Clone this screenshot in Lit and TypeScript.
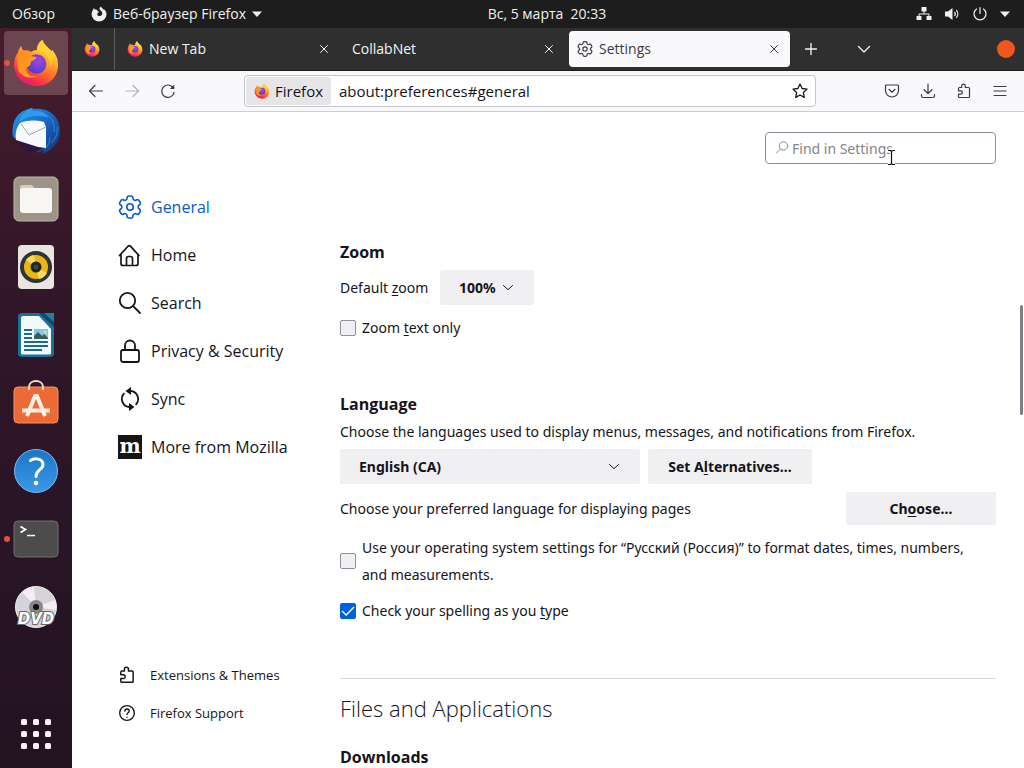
import { LitElement, html, svg, css } from "lit";
import { customElement } from "lit/decorators.js";
import { classMap } from "lit/directives/class-map.js";

const base = css`
  :host,
  * {
    box-sizing: border-box;
  }
  :host {
    font-family: "Open Sans", "Noto Sans", sans-serif;
    font-size: 14px;
    line-height: 20px;
  }
  svg {
    display: block;
    flex: none;
    overflow: visible;
  }
  button,
  input,
  select {
    font: inherit;
    color: inherit;
    margin: 0;
    padding: 0;
    border: 0;
    background: none;
  }
  a {
    color: inherit;
    text-decoration: none;
  }
`;

const icon = (body: unknown, size = 16, box = 16, width = 1) => html`<svg
  width=${size}
  height=${size}
  viewBox="0 0 ${box} ${box}"
  fill="none"
  stroke="currentColor"
  stroke-width=${width}
  stroke-linecap="round"
  stroke-linejoin="round"
  aria-hidden="true"
>
  ${body}
</svg>`;

/* Outline of a six-toothed gear centred on a 24 unit box. */
const gearOutline = (() => {
  const pts: number[][] = [];
  for (let i = 0; i < 6; i++) {
    const mid = i * 60 - 90;
    for (const [offset, radius] of [
      [-21, 8.2],
      [-14, 11.4],
      [14, 11.4],
      [21, 8.2],
    ]) {
      const a = ((mid + offset) * Math.PI) / 180;
      pts.push([12 + radius * Math.cos(a), 12 + radius * Math.sin(a)]);
    }
  }
  const lerp = (p: number[], q: number[], t: number) =>
    `${(p[0] + (q[0] - p[0]) * t).toFixed(2)} ${(p[1] + (q[1] - p[1]) * t).toFixed(2)}`;
  return (
    pts
      .map((p, i) => {
        const prev = pts[(i + pts.length - 1) % pts.length];
        const next = pts[(i + 1) % pts.length];
        return `${i ? "L" : "M"}${lerp(p, prev, 0.4)}Q${p[0].toFixed(2)} ${p[1].toFixed(2)} ${lerp(p, next, 0.4)}`;
      })
      .join("") + "Z"
  );
})();

const gear = svg`<path d=${gearOutline}/><circle cx="12" cy="12" r="3.2"/>`;
const puzzle = svg`<path d="M5.700 4.500V3a1.800 1.800 0 0 1 3.600 0v1.500h3.200a1 1 0 0 1 1 1v8a1 1 0 0 1-1 1H3.500a1 1 0 0 1-1-1v-2.300h2.200a1.700 1.700 0 0 0 0-3.400H2.500V5.500a1 1 0 0 1 1-1z"/>`;
const chevron = svg`<path d="M3.500 5.500l4.500 4.200 4.500-4.200"/>`;
const cross = svg`<path d="M4.500 4.500l7 7M11.500 4.500l-7 7"/>`;

const firefox = (size: number) => html`<svg width=${size} height=${size} viewBox="0 0 48 48" aria-hidden="true">
  <defs>
    <linearGradient id="flame" x1=".8" y1=".05" x2=".3" y2="1">
      <stop offset="0" stop-color="#fff04a" />
      <stop offset=".3" stop-color="#ffb52b" />
      <stop offset=".6" stop-color="#ff6b2d" />
      <stop offset=".85" stop-color="#f9284f" />
      <stop offset="1" stop-color="#e01a80" />
    </linearGradient>
    <radialGradient id="globe" cx=".6" cy=".35" r=".7">
      <stop offset="0" stop-color="#a245e6" />
      <stop offset="1" stop-color="#4b3fc0" />
    </radialGradient>
    <linearGradient id="ear" x1="0" y1="0" x2="1" y2="1">
      <stop offset="0" stop-color="#ff8a1e" />
      <stop offset="1" stop-color="#ffa52a" />
    </linearGradient>
  </defs>
  <path
    fill="url(#flame)"
    d="M30.500 1c1 3.500 3.500 5.500 6 8.200 1.500 1 2.200 1.700 3 3 .5-.4.5-1 .4-1.700 4.500 5.500 6.600 10 6.100 17.500C45 39.500 36 47 24.500 47 12 47 2 37.500 2 25.500c0-5 2-9.500 4-12 .3-2 1.200-4.500 3.300-6.500.3 2 1.200 3.600 2.500 4.700 2.700-.4 5.200.1 7.200 1.300 2-1.500 4.500-2 6-2-.2-4 2-8 5.500-10z"
  />
  <circle cx="24.500" cy="25" r="9.800" fill="url(#globe)" />
  <path
    fill="url(#ear)"
    d="M6 13.500c2-1.600 8-3.500 13-.5l-1 3.500c1.500 1.300 5 .8 6.500 1.700-.5 2.500-4 3.200-6 4.800 1 3-2 5-4 5.200-2 6 4 10 10 9-8 4-18-1-19-9-.5-5-.5-10 .5-14.700z"
  />
  <path fill="#ffd335" opacity=".8" d="M30.500 1c1 3.500 3.500 5.500 6 8.200 4 4.500 5 12 2 19 .3-6-2.500-12-8-14.500-2-1-3.500-1.600-5.500-2.700C25 6.500 27 3 30.500 1z" />
</svg>`;

const thunderbird = html`<svg width="48" height="48" viewBox="0 0 48 48" aria-hidden="true">
  <defs>
    <linearGradient id="bird" x1="0" y1="0" x2="1" y2="1">
      <stop offset="0" stop-color="#1d9bf0" />
      <stop offset=".5" stop-color="#1a66c4" />
      <stop offset="1" stop-color="#16306f" />
    </linearGradient>
  </defs>
  <path fill="url(#bird)" d="M20 1l2 1c14-2 26 7 26 22 0 11-8 20-18 23l2-4-8 3 3-4-8 2L1 30C-1 14 5 4 20 1z" />
  <path fill="#2b1740" d="M4 31l28 9-4 3-9 2C11 43 6 38 4 31z" />
  <path fill="#f7f9fc" d="M4 33c-1-6 0-12 4-17 8-3 16-3 24-1l2 5v21l-8-1z" />
  <path d="M9 17l8 11 17-8" fill="none" stroke="#98a4b8" stroke-width="1" />
  <path fill="#2f9bea" d="M7 15C9 7 14 3 20 1c-1 2 0 3 2 3 7-1 12 2 14 7-8-4-20-3-29 4z" />
  <path fill="none" stroke="#3aa0ee" opacity=".7" d="M34 8c7 3 9 10 8 17M45 20c1 6-1 12-6 16M38 30c0 5-2 9-5 12" />
</svg>`;

const files = html`<svg width="48" height="48" viewBox="0 0 48 48" aria-hidden="true">
  <rect x="2" y="2" width="44" height="44" rx="5" fill="#9c9486" stroke="#c0b8aa" />
  <path fill="#d5cdc0" d="M8 12a2 2 0 0 1 2-2h10l3 4v8H8z" />
  <rect x="8" y="13" width="32" height="25" rx="3" fill="#f8f6f2" />
</svg>`;

const music = html`<svg width="48" height="48" viewBox="0 0 48 48" aria-hidden="true">
  <rect x="6" y="2" width="36" height="44" rx="4" fill="#e9e5e0" />
  <circle cx="24" cy="24" r="16" fill="#333" />
  <circle cx="24" cy="24" r="12" fill="#e9b80e" />
  <path fill="#f8dc55" d="M24 24L14 17a12 12 0 0 1 8-5zM24 24l11 6a12 12 0 0 1-8 6z" />
  <circle cx="24" cy="24" r="5.500" fill="#1f2423" />
  <circle cx="24" cy="24" r="2.500" fill="#3b4a41" />
</svg>`;

const writer = html`<svg width="48" height="48" viewBox="0 0 48 48" aria-hidden="true">
  <path fill="#1b7196" d="M10 2h22l10 10v30a4 4 0 0 1-4 4H10a4 4 0 0 1-4-4V6a4 4 0 0 1 4-4z" />
  <path fill="#f3f9fb" d="M11 5h16l12 13v24a1.500 1.500 0 0 1-1.500 1.500h-27A1.500 1.500 0 0 1 9 42V7a2 2 0 0 1 2-2z" />
  <path fill="#0e4a68" d="M27 2h15v14z" />
  <path fill="#227ea0" d="M32 2h10v9z" />
  <path d="M12 19h8M12 23h8M12 27h8M12 31h24M12 35h24M12 39h18" stroke="#1c6a8e" stroke-width="2" />
  <rect x="22" y="18" width="14" height="10" fill="#83c7e6" />
  <circle cx="33" cy="21" r="1.500" fill="#f7e06a" />
  <path fill="#355f55" d="M22 28v-3l4-4 4 4 2-2 4 4v1z" />
</svg>`;

const software = html`<svg width="48" height="48" viewBox="0 0 48 48" aria-hidden="true">
  <rect x="2" y="8" width="44" height="36" rx="4" fill="#ec6a36" stroke="#f59468" />
  <path d="M17 11V8c0-8 14-8 14 0v3" fill="none" stroke="#f6dcb8" stroke-width="2" />
  <path d="M15 37l8-20h2l8 20" fill="none" stroke="#fff0e4" stroke-width="4" stroke-linejoin="round" />
  <path d="M10 31.500h28" stroke="#fff0e4" stroke-width="4" />
</svg>`;

const help = html`<svg width="48" height="48" viewBox="0 0 48 48" aria-hidden="true">
  <defs>
    <linearGradient id="sea" x1="0" y1="0" x2="0" y2="1">
      <stop offset="0" stop-color="#1a76c8" />
      <stop offset="1" stop-color="#3b98e6" />
    </linearGradient>
  </defs>
  <circle cx="24" cy="24" r="21.500" fill="url(#sea)" stroke="#7dbbee" />
  <path d="M18.500 13.500c4-3 12.500-2 12.500 4 0 5.500-7 5-7 12" fill="none" stroke="#fff" stroke-width="3" stroke-linecap="round" />
  <circle cx="24" cy="36" r="2.300" fill="#fff" />
</svg>`;

const terminal = html`<svg width="48" height="48" viewBox="0 0 48 48" aria-hidden="true">
  <rect x="2" y="6" width="44" height="36" rx="4" fill="#4c4c4c" stroke="#707070" />
  <path d="M8.500 11.500l5 3-5 3M15 20.500h8" fill="none" stroke="#fff" stroke-width="1.700" />
</svg>`;

const dvd = html`<svg width="48" height="48" viewBox="0 0 48 48" aria-hidden="true">
  <circle cx="24" cy="24" r="20.500" fill="#d5d3d5" stroke="#eee" />
  <path fill="#f3eef2" d="M24 24L10 9a20 20 0 0 1 12-5zM24 24l19-7a20 20 0 0 1 1 10z" />
  <circle cx="24" cy="24" r="7" fill="#878688" />
  <circle cx="24" cy="24" r="3" fill="#111" />
  <text
    x="24"
    y="41"
    text-anchor="middle"
    font-family="DejaVu Sans, sans-serif"
    font-size="15"
    font-weight="700"
    font-style="italic"
    fill="#fff"
    stroke="#666"
    stroke-width="2"
    paint-order="stroke"
  >
    DVD
  </text>
</svg>`;

const apps = html`<svg width="48" height="48" viewBox="0 0 48 48" fill="#fbeef6" aria-hidden="true">
  ${[9, 21, 33].map((y) => [9, 21, 33].map((x) => svg`<rect x=${x} y=${y} width="6" height="6" rx="1.500"/>`))}
</svg>`;

@customElement("top-bar")
class TopBar extends LitElement {
  static styles = [
    base,
    css`
      :host {
        display: grid;
        grid-template-columns: 1fr auto 1fr;
        align-items: center;
        height: 28px;
        padding: 0 14px 0 12px;
        background: #1d1d1d;
        color: #f0f0f0;
      }
      .left,
      .right,
      .app {
        display: flex;
        align-items: center;
      }
      .left {
        gap: 36px;
      }
      .app {
        gap: 6px;
      }
      .right {
        justify-content: flex-end;
        gap: 12px;
      }
      .clock {
        margin-left: 72px;
        white-space: pre;
      }
    `,
  ];
  render() {
    const caret = html`<svg width="10" height="6" viewBox="0 0 10 6" fill="currentColor" aria-hidden="true"><path d="M0 .5h10L5 6z" /></svg>`;
    return html`
      <div class="left">
        <button>Обзор</button>
        <button class="app">
          <svg width="16" height="16" viewBox="0 0 16 16" aria-hidden="true">
            <path fill="currentColor" d="M10 .5c.5 1.500 2 2.200 3 3.500l.6-.6c1.300 1.600 1.900 3.100 1.900 5A7.400 7.400 0 0 1 8 15.500 7.400 7.400 0 0 1 .6 8.300C.6 6.500 1.200 5 2 4l.8-2 1 1.600C5 3.300 6 3.600 6.600 4l-.3 1.200 2 .6-2 1.600C6 9 7 10 8.500 10c2 0 3-1.500 2.800-3C11 5 8.500 4.500 8.500 2.800 8.500 2 9 1 10 .5z" />
          </svg>
          <span>Веб-браузер Firefox</span>${caret}
        </button>
      </div>
      <button class="clock">Вс, 5 марта  20:33</button>
      <div class="right">
        <svg width="16" height="16" viewBox="0 0 16 16" fill="currentColor" aria-hidden="true">
          <rect x="5.500" y="1" width="5" height="4.500" rx=".5" />
          <rect x=".5" y="10" width="5" height="4" rx=".5" />
          <rect x="10.500" y="10" width="5" height="4" rx=".5" />
          <path d="M3 11V8h10v3M8 5v3" fill="none" stroke="currentColor" />
        </svg>
        <svg width="16" height="16" viewBox="0 0 16 16" fill="currentColor" aria-hidden="true">
          <path d="M1 5.500h3L8.500 2v12L4 10.500H1z" />
          <path d="M10.500 6c1 1.200 1 2.800 0 4M12.300 4.200c2 2.200 2 5.400 0 7.600" fill="none" stroke="currentColor" stroke-width="1.200" />
        </svg>
        ${icon(svg`<path d="M4.500 3a6 6 0 1 0 7 0M8 1.500v6"/>`, 16, 16, 1.2)} ${caret}
      </div>
    `;
  }
}

@customElement("app-dock")
class AppDock extends LitElement {
  static styles = [
    base,
    css`
      :host {
        display: flex;
        flex-direction: column;
        align-items: center;
        gap: 4px;
        width: 72px;
        padding: 3px 4px 2px;
        background: linear-gradient(#471c2c, #321629 35%, #291527 65%, #231321);
      }
      .tile {
        position: relative;
        display: grid;
        place-items: center;
        width: 64px;
        height: 64px;
        border-radius: 4px;
      }
      .active {
        background: #6b4550;
      }
      .running::before {
        content: "";
        position: absolute;
        left: 0;
        top: 29px;
        width: 6px;
        height: 6px;
        border-radius: 50%;
        background: #e2533a;
      }
      .all {
        margin-top: auto;
      }
    `,
  ];
  render() {
    const tiles: [string, unknown, boolean?, boolean?][] = [
      ["Firefox", firefox(48), true, true],
      ["Thunderbird", thunderbird],
      ["Файлы", files],
      ["Rhythmbox", music],
      ["LibreOffice Writer", writer],
      ["Ubuntu Software", software],
      ["Справка", help],
      ["Терминал", terminal, false, true],
      ["DVD", dvd],
    ];
    return html`${tiles.map(
        ([name, art, active, running]) =>
          html`<button aria-label=${name} class=${classMap({ tile: true, active: !!active, running: !!running })}>${art}</button>`,
      )}<button class="tile all" aria-label="Показать приложения">${apps}</button>`;
  }
}

@customElement("browser-chrome")
class BrowserChrome extends LitElement {
  static styles = [
    base,
    css`
      :host {
        display: block;
        color: #15141a;
      }
      .tabs {
        display: flex;
        align-items: center;
        height: 43px;
        padding-right: 9px;
        background: #302f30;
        border-bottom: 1px solid #1c1b1d;
        color: #f4f4f4;
      }
      .pinned {
        display: grid;
        place-items: center;
        align-self: stretch;
        width: 43px;
        margin-right: 2px;
        padding-right: 2px;
        border-right: 1px solid #5c5b5e;
      }
      .tab {
        display: flex;
        align-items: center;
        flex: 0 1 221px;
        height: 36px;
        margin: 0 2px;
        padding: 0 8px;
        border-radius: 4px;
      }
      .selected {
        background: #f9f9fb;
        color: #3c3b42;
      }
      .label {
        display: flex;
        align-items: center;
        flex: 1;
        gap: 6px;
      }
      .tool {
        display: grid;
        place-items: center;
        width: 36px;
        height: 36px;
      }
      .new {
        width: 38px;
      }
      .list {
        margin-left: 16px;
      }
      .close-window {
        width: 18px;
        height: 18px;
        margin-left: auto;
        border-radius: 50%;
        background: #f0561d;
      }
      .bar {
        display: grid;
        grid-template-columns: 172px minmax(0, 572px) 1fr;
        align-items: center;
        height: 41px;
        background: #f9f9fb;
        border-bottom: 1px solid #ccccd2;
      }
      .history {
        display: flex;
        padding-left: 6px;
      }
      .history svg {
        color: #3c3b42;
      }
      .forward {
        opacity: 0.35;
      }
      .address {
        display: flex;
        align-items: center;
        height: 32px;
        padding: 1px;
        border: 1px solid #c4c4cb;
        border-radius: 4px;
        background: #fff;
        font-size: 15px;
      }
      .identity {
        display: flex;
        align-items: center;
        gap: 5px;
        height: 28px;
        padding: 0 8px;
        border-radius: 3px;
        background: #e6e6e9;
      }
      .url {
        flex: 1;
        min-width: 0;
        padding-left: 8px;
        outline: none;
      }
      .star {
        width: 28px;
      }
      .actions {
        display: flex;
        justify-content: flex-end;
        padding-right: 6px;
        color: #3c3b42;
      }
    `,
  ];
  render() {
    const tab = (title: string, art: unknown, selected = false) => html`<div class=${classMap({ tab: true, selected })}>
      <button class="label">${art}<span>${title}</span></button>
      <button aria-label="Close tab">${icon(cross)}</button>
    </div>`;
    return html`
      <div class="tabs">
        <button class="pinned" aria-label="Pinned tab">${firefox(16)}</button>
        ${tab("New Tab", firefox(16))} ${tab("CollabNet", "")} ${tab("Settings", icon(gear, 16, 24, 1.8), true)}
        <button class="tool new" aria-label="New tab">${icon(svg`<path d="M8 2.500v11M2.500 8h11"/>`, 16, 16, 1.3)}</button>
        <button class="tool list" aria-label="List tabs">${icon(svg`<path d="M2.500 5.500L8 11l5.500-5.500"/>`, 16, 16, 1.3)}</button>
        <button class="close-window" aria-label="Close"></button>
      </div>
      <div class="bar">
        <div class="history">
          <button class="tool" aria-label="Back">${icon(svg`<path d="M14.500 8h-13M7 2.500L1.500 8 7 13.500"/>`, 16, 16, 1.2)}</button>
          <button class="tool forward" aria-label="Forward">${icon(svg`<path d="M1.500 8h13M9 2.500L14.500 8 9 13.500"/>`, 16, 16, 1.2)}</button>
          <button class="tool" aria-label="Reload">
            ${icon(svg`<path d="M14 9.500A6.200 6.200 0 1 1 12.500 4"/><path d="M14.300 1.500v4.500H9.800z" fill="currentColor" stroke="none"/>`, 16, 16, 1.2)}
          </button>
        </div>
        <div class="address">
          <button class="identity">${firefox(16)}<span>Firefox</span></button>
          <input class="url" aria-label="Address" value="about:preferences#general" />
          <button class="tool star" aria-label="Bookmark">
            ${icon(svg`<path d="M8 1l2.100 4.500 4.900.6-3.600 3.400.9 4.900L8 12l-4.300 2.400.9-4.900L1 6.100l4.900-.6z"/>`, 16, 16, 1.3)}
          </button>
        </div>
        <div class="actions">
          <button class="tool" aria-label="Pocket">
            ${icon(svg`<path d="M2.500 2h11a1 1 0 0 1 1 1v4.500a6.500 6.500 0 0 1-13 0V3a1 1 0 0 1 1-1z"/><path d="M5 6.300l3 2.900 3-2.900"/>`, 16, 16, 1.2)}
          </button>
          <button class="tool" aria-label="Downloads">
            ${icon(svg`<path d="M8 1v9.500M4 6.700l4 3.800 4-3.800M1.500 11.500v1.500a1.500 1.500 0 0 0 1.500 1.500h10a1.500 1.500 0 0 0 1.500-1.500v-1.500"/>`, 16, 16, 1.2)}
          </button>
          <button class="tool" aria-label="Extensions">${icon(puzzle, 16, 16, 1.2)}</button>
          <button class="tool" aria-label="Menu">${icon(svg`<path d="M2 3.500h12M2 8h12M2 12.500h12"/>`, 16, 16, 1.2)}</button>
        </div>
      </div>
    `;
  }
}

@customElement("settings-page")
class SettingsPage extends LitElement {
  static styles = [
    base,
    css`
      :host {
        position: relative;
        display: grid;
        grid-template-columns: 268px minmax(0, 656px) 1fr;
        overflow: hidden;
        background: #fff;
        color: #15141a;
        line-height: 27px;
      }
      .side {
        display: flex;
        flex-direction: column;
        justify-content: space-between;
        min-height: 0;
        padding: 71px 0 36px 46px;
      }
      .categories,
      .extras {
        display: flex;
        flex-direction: column;
      }
      .category {
        display: flex;
        align-items: center;
        gap: 9px;
        height: 48px;
        font-size: 16px;
      }
      .current {
        color: #0a5bcb;
      }
      .extra {
        display: flex;
        align-items: center;
        gap: 14px;
        height: 38px;
        font-size: 13px;
      }
      .main {
        min-height: 0;
        font-family: "Noto Sans", "Open Sans", sans-serif;
      }
      .find {
        position: relative;
        display: flex;
        align-items: center;
        gap: 2px;
        width: 231px;
        height: 32px;
        margin: 20px 0 0 auto;
        padding-left: 8px;
        border: 1px solid #8f8f9d;
        border-radius: 4px;
        color: #8a8a92;
      }
      .find input {
        flex: 1;
        min-width: 0;
        outline: none;
      }
      .find input::placeholder {
        color: #84848c;
        opacity: 1;
      }
      .pointer {
        position: absolute;
        left: 121px;
        top: 16px;
      }
      h1,
      h2 {
        font-family: "Open Sans", "Noto Sans", sans-serif;
        margin: 0;
      }
      h1 {
        font-size: 22px;
        font-weight: 300;
        line-height: 32px;
      }
      h2 {
        font-size: 16px;
        font-weight: 700;
        line-height: 27px;
      }
      .zoom {
        margin-top: 75px;
      }
      .language {
        margin-top: 50px;
      }
      .files {
        margin-top: 54px;
        padding-top: 13px;
        border-top: 1px solid #d7d7db;
      }
      .files h2 {
        margin-top: 20px;
      }
      p {
        margin: 0;
      }
      .row {
        display: flex;
        align-items: center;
        gap: 8px;
        margin-top: 4px;
      }
      .row label {
        min-width: 92px;
      }
      .pages {
        justify-content: space-between;
        margin-top: 8px;
      }
      .check {
        display: flex;
        align-items: center;
        gap: 6px;
        margin-top: 9px;
        padding-right: 8px;
      }
      .check input {
        appearance: none;
        flex: none;
        width: 16px;
        height: 16px;
        border: 1px solid #8f8f9d;
        border-radius: 2px;
        background: #f0f0f2;
      }
      .check input:checked {
        border-color: #0061e0;
        background: #0061e0
          url("data:image/svg+xml,%3Csvg xmlns='http://www.w3.org/2000/svg' viewBox='0 0 14 14'%3E%3Cpath d='M1 7l4.200 4L13 3' fill='none' stroke='white' stroke-width='1.300'/%3E%3C/svg%3E");
      }
      .pick {
        display: grid;
        align-items: center;
        border-radius: 3px;
        background: #f0f0f2;
      }
      .pick select,
      .pick svg {
        grid-area: 1 / 1;
      }
      .pick select {
        appearance: none;
        height: 35px;
        padding-left: 19px;
        font-weight: 700;
      }
      .pick svg {
        justify-self: end;
        margin-right: 18px;
        pointer-events: none;
      }
      .level {
        width: 94px;
      }
      .locale {
        width: 300px;
      }
      .push {
        min-width: 164px;
        height: 35px;
        padding: 0 16px;
        border-radius: 3px;
        background: #f0f0f2;
        font-weight: 700;
      }
      .choose {
        min-width: 150px;
        height: 33px;
      }
      u {
        text-underline-offset: 2px;
      }
      .thumb {
        position: absolute;
        right: 1px;
        top: 193px;
        width: 3px;
        height: 110px;
        border-radius: 2px;
        background: #7e7e84;
      }
    `,
  ];
  render() {
    const nav: [string, unknown][] = [
      ["General", icon(gear, 24, 24, 1.6)],
      [
        "Home",
        icon(svg`<path d="M1.500 12.500L10 3.200a1.700 1.700 0 0 1 2.400 0l8.600 9.300M3 11v9.500a2 2 0 0 0 2 2h13a2 2 0 0 0 2-2V11M8.500 22v-6.500a2 2 0 0 1 2-2h2a2 2 0 0 1 2 2V22"/>`, 24, 24, 1.7),
      ],
      ["Search", icon(svg`<circle cx="9.500" cy="9.500" r="7.700"/><path d="M15.200 15.200l6.800 6.800"/>`, 24, 24, 1.8)],
      ["Privacy & Security", icon(svg`<rect x="3" y="11" width="18" height="12" rx="2"/><path d="M7 11V6.500a5 5 0 0 1 10 0V11"/>`, 24, 24, 1.8)],
      [
        "Sync",
        icon(svg`<path d="M12.500 4a8 8 0 0 1 5.600 13.300M11.500 20A8 8 0 0 1 5.900 6.700"/><path d="M13 0v8L7.500 4zM11 24v-8l5.500 4z" fill="currentColor" stroke="none"/>`, 24, 24, 1.8),
      ],
      [
        "More from Mozilla",
        html`<svg width="24" height="24" viewBox="0 0 24 24" aria-hidden="true">
          <rect width="24" height="24" fill="#15141a" />
          <text x="12" y="18" text-anchor="middle" font-family="DejaVu Serif, serif" font-weight="700" font-size="20" fill="#fff">m</text>
        </svg>`,
      ],
    ];
    return html`
      <div class="side">
        <nav class="categories">
          ${nav.map(([name, art], i) => html`<a href="#" class=${classMap({ category: true, current: i === 0 })}>${art}<span>${name}</span></a>`)}
        </nav>
        <div class="extras">
          <a href="#" class="extra">${icon(puzzle, 18, 16, 1.3)}<span>Extensions &amp; Themes</span></a>
          <a href="#" class="extra">
            ${icon(svg`<circle cx="8" cy="8" r="6.500"/><path d="M6 6.300c.2-2.500 4-2.400 4 0 0 1.500-2 1.500-2 3M8 11.700v.1"/>`, 18, 16, 1.2)}<span>Firefox Support</span>
          </a>
        </div>
      </div>
      <main class="main">
        <div class="find">
          ${icon(svg`<circle cx="9.500" cy="6" r="4.200"/><path d="M6.500 9L2.500 13"/>`)}
          <input type="search" aria-label="Find in Settings" placeholder="Find in Settings" />
          <svg class="pointer" width="9" height="17" viewBox="0 0 9 17" fill="none" aria-hidden="true">
            <path d="M1 1.500h2.500l1 1 1-1H8M4.500 2.500v12M1 15.500h2.500l1-1 1 1H8" stroke="#fff" stroke-width="3" />
            <path d="M1 1.500h2.500l1 1 1-1H8M4.500 2.500v12M1 15.500h2.500l1-1 1 1H8" stroke="#111" stroke-width="1.200" />
          </svg>
        </div>
        <section class="zoom">
          <h2>Zoom</h2>
          <div class="row">
            <label for="level">Default <u>z</u>oom</label>
            <span class="pick level"><select id="level"><option>100%</option></select>${icon(chevron)}</span>
          </div>
          <div class="check"><input type="checkbox" id="text-only" /><label for="text-only">Zoom <u>t</u>ext only</label></div>
        </section>
        <section class="language">
          <h2>Language</h2>
          <p>Choose the languages used to display menus, messages, and notifications from Firefox.</p>
          <div class="row">
            <span class="pick locale"><select aria-label="Language"><option>English (CA)</option></select>${icon(chevron)}</span>
            <button class="push">Set A<u>l</u>ternatives…</button>
          </div>
          <div class="row pages">
            <span>Choose your preferred language for displaying pages</span>
            <button class="push choose">Ch<u>o</u>ose…</button>
          </div>
          <div class="check">
            <input type="checkbox" id="system" />
            <label for="system">Use your operating system settings for “Русский (Россия)” to format dates, times, numbers, and measurements.</label>
          </div>
          <div class="check"><input type="checkbox" id="spelling" checked /><label for="spelling">Check your spelling as you <u>t</u>ype</label></div>
        </section>
        <section class="files">
          <h1>Files and Applications</h1>
          <h2>Downloads</h2>
        </section>
      </main>
      <div class="thumb"></div>
    `;
  }
}

@customElement("app-root")
class AppRoot extends LitElement {
  static styles = css`
    :host {
      display: grid;
      grid-template: auto auto minmax(0, 1fr) / auto minmax(0, 1fr);
      grid-template-areas: "top top" "dock chrome" "dock page";
      height: 100vh;
      overflow: hidden;
    }
    .top {
      grid-area: top;
    }
    .dock {
      grid-area: dock;
    }
    .chrome {
      grid-area: chrome;
    }
    .page {
      grid-area: page;
    }
  `;
  render() {
    return html`
      <top-bar class="top"></top-bar>
      <app-dock class="dock"></app-dock>
      <browser-chrome class="chrome"></browser-chrome>
      <settings-page class="page"></settings-page>
    `;
  }
}
